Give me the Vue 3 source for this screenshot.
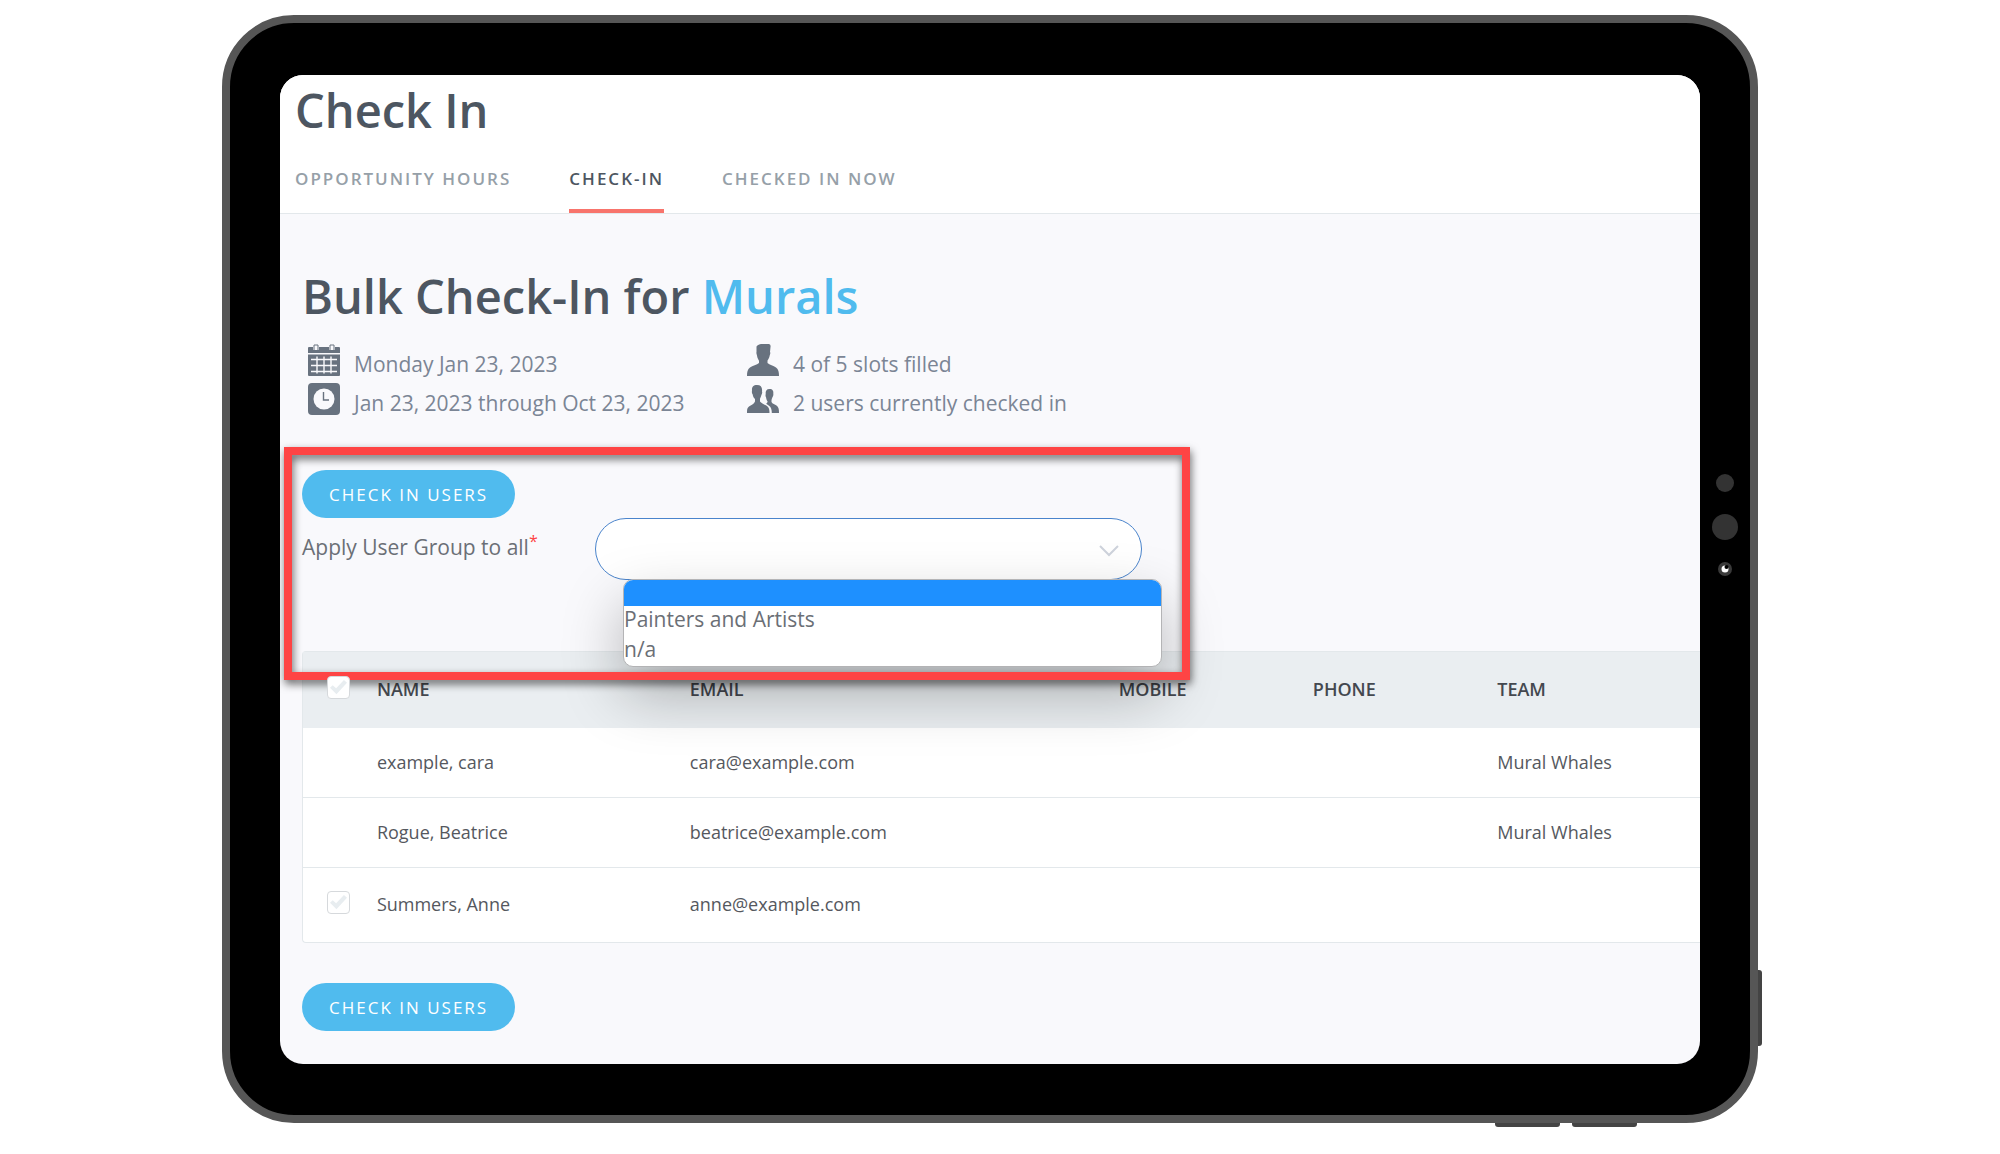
<script setup>
import { ref } from 'vue'

const tabs = [
  { label: 'Opportunity Hours', active: false },
  { label: 'Check-In', active: true },
  { label: 'Checked In Now', active: false },
]
const facts = [
  { icon: 'calendar', text: 'Monday Jan 23, 2023' },
  { icon: 'person', text: '4 of 5 slots filled' },
  { icon: 'clock', text: 'Jan 23, 2023 through Oct 23, 2023' },
  { icon: 'people', text: '2 users currently checked in' },
]
const groups = ['', 'Painters and Artists', 'n/a']
const columns = ['Name', 'Email', 'Mobile', 'Phone', 'Team']
const users = [
  { name: 'example, cara', email: 'cara@example.com', team: 'Mural Whales', selectable: false },
  { name: 'Rogue, Beatrice', email: 'beatrice@example.com', team: 'Mural Whales', selectable: false },
  { name: 'Summers, Anne', email: 'anne@example.com', team: '', selectable: true },
]
const selectedGroup = ref('')
</script>

<template>
  <div class="page">
    <div class="device">
      <main class="screen">
        <header class="top">
          <h1>Check In</h1>
          <nav class="tabs">
            <a v-for="t in tabs" :key="t.label" href="#" :class="{ active: t.active }">{{ t.label }}</a>
          </nav>
        </header>

        <section class="body">
          <h2>Bulk Check-In for <a href="#">Murals</a></h2>

          <ul class="facts">
            <li v-for="f in facts" :key="f.icon">
              <svg v-if="f.icon === 'calendar'" viewBox="0 0 32 32" aria-hidden="true">
                <path fill="currentColor" d="M0 4q0-1 1-1h4v3h6V3h10v3h6V3h4q1 0 1 1v5H0z" />
                <path fill="none" stroke="currentColor" d="M6 6V1h4v5M22 6V1h4v5" />
                <path fill="currentColor" d="M0 10.500h32V31q0 1-1 1H1q-1 0-1-1z" />
                <path fill="none" stroke="#f9f9fc" stroke-width="1.400" d="M3 15.500h26M3 21.500h26M3 27.500h26M9 12.500v17M16 12.500v17M23 12.500v17" />
              </svg>
              <svg v-else-if="f.icon === 'clock'" viewBox="0 0 32 32" aria-hidden="true">
                <rect width="32" height="32" rx="4" fill="currentColor" />
                <circle cx="16" cy="16" r="10.500" fill="#f9f9fc" />
                <path fill="none" stroke="currentColor" stroke-width="1.400" d="M15.500 9v8H21" />
              </svg>
              <svg v-else-if="f.icon === 'person'" viewBox="0 0 32 32" aria-hidden="true">
                <path fill="currentColor" d="M9.500 2.500C11 .5 13 0 16 0h6q2 .5 1.500 3l-.5 5q.8 1-.3 3.500C22 15 20.500 16 20.500 17v2c2 2 6 2.500 8.500 4.500 2.500 2 3 4.500 3 8.500H0c0-4 .5-6.500 3-8.500S10 21 12 19v-2c0-1-1.500-2-2-5.500-1-2.500-.5-3.500-.5-3.500z" />
              </svg>
              <svg v-else viewBox="0 0 32 32" aria-hidden="true">
                <path fill="currentColor" d="M10 2c4 0 5.500 2.500 5 6.500.5 1 0 2.500-.6 3.500-.4 2-1.400 3-1.400 4v2.500c1.500 2 5 3 7 4.500 2 1.800 2.500 3.500 2.500 7H0c0-3.500 0-5 2-6.500s5-2.500 6-5V16c-1.500-1.500-2-2.500-2.300-4.500C4.800 10.500 4.700 9 5 8c-.3-4 1-6 5-6z" />
                <path fill="currentColor" d="M22.500 6c3.200 0 4.200 2 3.800 5 .3 1-.2 2.300-.8 3-.3 1.500-1 2.300-1 3.500V19c.8 1.800 3.500 2.500 5 3.500 2 1.400 2.500 3.500 2.500 7.500h-7.200c0-3.500-.6-5.600-2.800-7.300l-2.800-2c.6-.6 1.300-1 1.400-2.200-1-1.200-1.300-2.500-1.500-4-.8-1.500-.6-2.500-.4-3.500-.4-3 .8-5 3.800-5z" />
              </svg>
              <span>{{ f.text }}</span>
            </li>
          </ul>

          <div class="apply">
            <button type="button" class="btn">Check in users</button>
            <div class="field">
              <label for="group">Apply User Group to all<sup>*</sup></label>
              <div class="picker">
                <select id="group" v-model="selectedGroup">
                  <option v-for="g in groups" :key="g" :value="g">{{ g }}</option>
                </select>
                <svg class="chevron" viewBox="0 0 20 12" aria-hidden="true">
                  <path d="M1 1l9 9 9-9" fill="none" stroke="#ced3dc" stroke-width="2" />
                </svg>
                <ul class="menu" role="listbox" aria-label="User groups">
                  <li v-for="g in groups" :key="g" role="option" :class="{ current: g === selectedGroup }">{{ g }}</li>
                </ul>
              </div>
            </div>
            <div class="highlight"></div>
          </div>

          <table>
            <colgroup>
              <col class="c-check" /><col class="c-name" /><col class="c-email" />
              <col class="c-mobile" /><col class="c-phone" /><col />
            </colgroup>
            <thead>
              <tr>
                <th><input type="checkbox" aria-label="Select all" /></th>
                <th v-for="c in columns" :key="c">{{ c }}</th>
              </tr>
            </thead>
            <tbody>
              <tr v-for="u in users" :key="u.name">
                <td><input v-if="u.selectable" type="checkbox" :aria-label="u.name" /></td>
                <td>{{ u.name }}</td>
                <td>{{ u.email }}</td>
                <td></td>
                <td></td>
                <td>{{ u.team }}</td>
              </tr>
            </tbody>
          </table>

          <button type="button" class="btn">Check in users</button>
        </section>
      </main>

      <div class="sensors">
        <i class="dot"></i>
        <i class="dot large"></i>
        <svg viewBox="0 0 14 14" aria-hidden="true">
          <circle cx="7" cy="7" r="7" fill="#3a3a3a" />
          <circle cx="7" cy="7" r="3.500" fill="#fff" />
          <circle cx="8.500" cy="5" r="2" fill="#000" />
        </svg>
      </div>
      <i class="key side"></i>
      <i class="key first"></i>
      <i class="key second"></i>
    </div>
  </div>
</template>

<style>
body {
  margin: 0;
  background: #fff;
}
</style>

<style scoped>
* {
  box-sizing: border-box;
}
.page {
  padding: 15px 12.1% 30px 11.1%;
  font-family: "Open Sans", "Noto Sans", sans-serif;
}
.device {
  position: relative;
  display: flex;
  padding: 52px 0 51px 50px;
  border: 8px solid #565656;
  border-radius: 72px;
  background: #000;
}
.screen {
  flex: 1;
  min-width: 0;
  border-radius: 23px;
  background: #f9f9fc;
  overflow: hidden;
}
.sensors {
  width: 50px;
  padding-top: 399px;
  display: flex;
  flex-direction: column;
  align-items: center;
  gap: 22px;
}
.dot {
  width: 18px;
  height: 18px;
  border-radius: 50%;
  background: #333;
}
.dot.large {
  width: 26px;
  height: 26px;
}
.sensors svg {
  width: 14px;
  height: 14px;
}
.key {
  position: absolute;
  background: #444;
}
.key.side {
  right: -12px;
  bottom: 69px;
  width: 4px;
  height: 76px;
  border-radius: 0 3px 3px 0;
}
.key.first,
.key.second {
  bottom: -12px;
  width: 65px;
  height: 4px;
  border-radius: 0 0 3px 3px;
}
.key.first {
  right: 190px;
}
.key.second {
  right: 113px;
}

.top {
  padding: 7px 15px 0;
  background: #fff;
  border-bottom: 1px solid #e3e8eb;
}
h1,
h2 {
  margin: 0;
  font-size: 47px;
  line-height: 56px;
  font-weight: 600;
  color: #4d5661;
}
h2 a {
  color: #50bbee;
  text-decoration: none;
}
.tabs {
  display: flex;
  gap: 58px;
  margin-top: 29px;
}
.tabs a {
  padding-bottom: 18px;
  border-bottom: 4px solid transparent;
  font-size: 17px;
  line-height: 24px;
  font-weight: 600;
  letter-spacing: 2px;
  text-transform: uppercase;
  text-decoration: none;
  color: #96a0a8;
}
.tabs a.active {
  color: #4d5661;
  border-color: #f8746c;
}

.body {
  padding: 54px 0 33px 22px;
}
.facts {
  display: grid;
  grid-template-columns: 439px 1fr;
  margin: 20px 0 0;
  padding: 0 0 0 6px;
  list-style: none;
}
.facts li {
  display: flex;
  gap: 14px;
  height: 39px;
  font-size: 21px;
  line-height: 40px;
  color: #7b8595;
}
.facts svg {
  width: 32px;
  height: 32px;
  color: #68727f;
}
.apply {
  position: relative;
  margin: 48px 0 71px;
}
.btn {
  display: block;
  height: 48px;
  padding: 0 27px;
  border: 0;
  border-radius: 24px;
  background: #50bbee;
  color: #fff;
  font-family: inherit;
  font-size: 17px;
  letter-spacing: 2px;
  text-transform: uppercase;
}
.field {
  display: flex;
}
label {
  width: 293px;
  font-size: 21px;
  line-height: 59px;
  color: #6b6f76;
}
sup {
  font-size: 16px;
  line-height: 0;
  color: #fe4444;
}
.picker {
  position: relative;
  width: 547px;
}
select {
  display: block;
  width: 100%;
  height: 62px;
  padding: 0 28px;
  appearance: none;
  border: 1px solid #4a84cc;
  border-radius: 31px;
  background: #fff;
  font-family: inherit;
  font-size: 21px;
}
.chevron {
  position: absolute;
  right: 23px;
  top: 27px;
  width: 20px;
  height: 12px;
}
.menu {
  position: absolute;
  left: 28px;
  top: 61px;
  width: 539px;
  margin: 0;
  padding: 0;
  list-style: none;
  border: 1px solid #b4b4b6;
  border-radius: 10px;
  background: #fff;
  overflow: hidden;
  box-shadow: 0 26px 60px rgba(0, 0, 0, 0.28);
  font-size: 21px;
  line-height: 27px;
  color: #6b6f76;
}
.menu li {
  height: 30px;
}
.menu .current {
  height: 26px;
  background: #1e90ff;
}
.highlight {
  position: absolute;
  left: -18px;
  top: -23px;
  width: 906px;
  height: 233px;
  border: 8px solid #fe4444;
  filter: drop-shadow(1px 4px 4px rgba(0, 0, 0, 0.6));
  pointer-events: none;
}

table {
  width: 100%;
  margin-bottom: 40px;
  table-layout: fixed;
  border-collapse: separate;
  border-spacing: 0;
  border: 1px solid #e3e8eb;
  border-right: 0;
  border-radius: 4px 0 0 4px;
  background: #fff;
}
.c-check {
  width: 4%;
}
.c-name {
  width: 22.4%;
}
.c-email {
  width: 30.7%;
}
.c-mobile {
  width: 13.9%;
}
.c-phone {
  width: 13.2%;
}
th,
td {
  height: 70px;
  padding: 0 0 2px 18px;
  text-align: left;
  font-size: 18px;
  line-height: 24px;
  color: #55585e;
}
th {
  height: 76px;
  background: #eaeef1;
  font-weight: 600;
  text-transform: uppercase;
  color: #44484f;
}
th:first-child,
td:first-child {
  padding-left: 24px;
  padding-bottom: 6px;
}
tbody tr:first-child td {
  height: 69px;
}
tbody tr + tr td {
  border-top: 1px solid #e3e8eb;
}
tbody tr:last-child td {
  height: 75px;
}
input[type="checkbox"] {
  display: block;
  position: relative;
  width: 23px;
  height: 23px;
  margin: 0;
  appearance: none;
  border: 1px solid #d6d9dc;
  border-radius: 4px;
  background: #fff;
}
input[type="checkbox"]::before {
  content: "";
  position: absolute;
  inset: 3px 2px;
  background: #e8edf0;
  clip-path: polygon(0 55%, 16% 38%, 36% 58%, 82% 4%, 100% 22%, 38% 98%);
}
</style>
